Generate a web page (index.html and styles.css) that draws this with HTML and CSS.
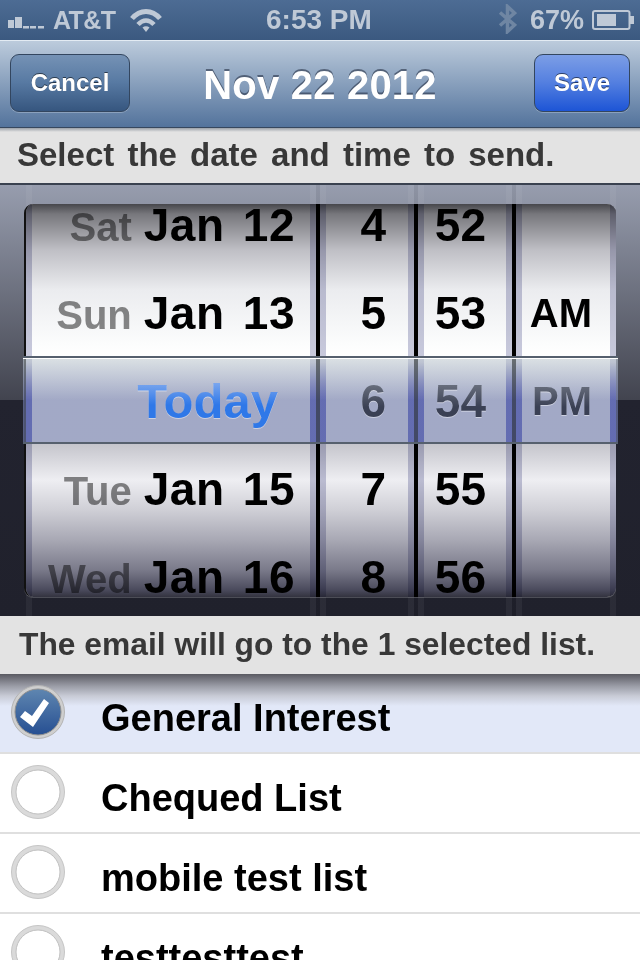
FILE: index.html
```html
<!DOCTYPE html>
<html lang="en">
<head>
<meta charset="utf-8">
<title>Send date</title>
<link rel="stylesheet" href="styles.css">
</head>
<body>
<div class="screen">
  <div class="status">
    <div class="status-left">
      <svg class="signal" width="38" height="12" viewBox="0 0 38 12"><rect x="0" y="3" width="6" height="8"/><rect x="7" y="0" width="7" height="11"/><rect x="15" y="9" width="6" height="2.500"/><rect x="22" y="9" width="6" height="2.500"/><rect x="30" y="9" width="6" height="2.500"/></svg>
      <span class="carrier">AT&amp;T</span>
      <svg class="wifi" width="32" height="24" viewBox="0 0 32 24"><path d="M2 10.500C10 1 22 1 30 10.500" fill="none" stroke="currentColor" stroke-width="5"/><path d="M8 16.500c5-5.500 11-5.500 16 0" fill="none" stroke="currentColor" stroke-width="4.500"/><path d="M12.500 19.500c2-1.800 5-1.800 7 0L16 24z" fill="currentColor"/></svg>
    </div>
    <span class="clock">6:53 PM</span>
    <div class="status-right">
      <svg class="bt" width="19" height="30" viewBox="0 0 19 30"><path d="M2 8.500L16.500 21L9.500 27.500V2.500L16.500 9L2 21.500" fill="none" stroke="currentColor" stroke-width="3.500"/></svg>
      <span class="pct">67%</span>
      <svg class="battery" width="42" height="20" viewBox="0 0 42 20"><rect x="1" y="1" width="36.500" height="18" rx="2" fill="none" stroke="currentColor" stroke-width="2"/><rect x="5" y="4" width="19" height="12" fill="currentColor"/><rect x="38" y="6" width="4" height="8" fill="currentColor"/></svg>
    </div>
  </div>
  <div class="nav">
    <button class="btn btn-cancel">Cancel</button>
    <h1 class="title">Nov 22 2012</h1>
    <button class="btn btn-save">Save</button>
  </div>
  <div class="bar bar-top">Select the date and time to send.</div>
  <div class="picker">
    <div class="wheels">
      <div class="wheel wheel-date">
        <div class="row"><span class="day">Sat</span>Jan 12</div>
        <div class="row"><span class="day">Sun</span>Jan 13</div>
        <div class="row row-today">Today</div>
        <div class="row"><span class="day">Tue</span>Jan 15</div>
        <div class="row"><span class="day">Wed</span>Jan 16</div>
      </div>
      <div class="wheel wheel-hour">
        <div class="row">4</div><div class="row">5</div><div class="row row-sel">6</div><div class="row">7</div><div class="row">8</div>
      </div>
      <div class="wheel wheel-min">
        <div class="row">52</div><div class="row">53</div><div class="row row-sel">54</div><div class="row">55</div><div class="row">56</div>
      </div>
      <div class="wheel wheel-ampm">
        <div class="row"></div><div class="row">AM</div><div class="row row-sel">PM</div><div class="row"></div><div class="row"></div>
      </div>
      <div class="shade"></div>
    </div>
    <div class="band"></div>
  </div>
  <div class="bar bar-info">The email will go to the 1 selected list.</div>
  <ul class="list">
    <li class="item item-on">
      <svg class="radio" width="56" height="56" viewBox="0 0 56 56"><defs><linearGradient id="blue" x1="0" y1="0" x2="0" y2="1"><stop offset="0" stop-color="#5f86b0"/><stop offset="1" stop-color="#264f92"/></linearGradient></defs><circle cx="28" cy="28" r="26.500" fill="#cfcfcf" stroke="#b4b4b4"/><circle cx="28" cy="28" r="23" fill="url(#blue)" stroke="#8f8f8f"/><path d="M10 33L15 27L22 32L34 15L39 19L23 43z" fill="#fff"/></svg>
      <span class="item-label">General Interest</span>
    </li>
    <li class="item">
      <svg class="radio" width="56" height="56" viewBox="0 0 56 56"><circle cx="28" cy="28" r="26.500" fill="#dadada" stroke="#c6c6c6"/><circle cx="28" cy="28" r="22" fill="#fff" stroke="#c0c0c0"/></svg>
      <span class="item-label">Chequed List</span>
    </li>
    <li class="item">
      <svg class="radio" width="56" height="56" viewBox="0 0 56 56"><circle cx="28" cy="28" r="26.500" fill="#dadada" stroke="#c6c6c6"/><circle cx="28" cy="28" r="22" fill="#fff" stroke="#c0c0c0"/></svg>
      <span class="item-label">mobile test list</span>
    </li>
    <li class="item">
      <svg class="radio" width="56" height="56" viewBox="0 0 56 56"><circle cx="28" cy="28" r="26.500" fill="#dadada" stroke="#c6c6c6"/><circle cx="28" cy="28" r="22" fill="#fff" stroke="#c0c0c0"/></svg>
      <span class="item-label">testtesttest</span>
    </li>
  </ul>
</div>
</body>
</html>
```

FILE: styles.css
```css
* { box-sizing: border-box; }
html, body { margin: 0; padding: 0; }
body { font-family: "Liberation Sans", Arial, sans-serif; font-weight: 700; background: #fff; }
.screen { width: 640px; height: 960px; overflow: hidden; display: flex; flex-direction: column; }

.status { height: 40px; flex: none; display: flex; align-items: center; justify-content: space-between; padding: 0 6px 0 8px; background: linear-gradient(#4d6c94, #3b5980); color: #bfc9d6; position: relative; }
.status-left, .status-right { display: flex; align-items: center; }
.signal { fill: currentColor; margin-right: 7px; margin-top: 6px; }
.carrier { font-size: 25px; letter-spacing: -.6px; }
.wifi { margin-left: 15px; margin-top: -1px; }
.clock { font-size: 28px; position: absolute; left: 266px; top: 4px; line-height: 32px; }
.bt { color: #6f86a3; margin-right: 13px; margin-top: -2px; }
.pct { font-size: 27px; margin-right: 8px; }
.battery { color: #bfc9d6; }

.nav { height: 88px; flex: none; display: flex; align-items: center; justify-content: space-between; padding: 0 10px; background: linear-gradient(#bccbdc, #53739c); border-top: 1px solid #e3ebf3; border-bottom: 1px solid #36475e; }
.btn { height: 58px; border-radius: 9px; font: 700 24px "Liberation Sans", Arial, sans-serif; color: #fff; text-shadow: 0 -1px 0 rgba(0,0,0,.55); border: 1px solid #33465f; box-shadow: 0 1px 0 rgba(255,255,255,.25); padding: 0; margin-top: -2px; }
.btn-cancel { width: 120px; background: linear-gradient(#7592b5, #587aa3 48%, #36567f); }
.btn-save { width: 96px; background: linear-gradient(#7c9ee6, #5580e0 48%, #1d55d6); }
.title { margin: 3px 24px 0 0; font-size: 40px; letter-spacing: .2px; color: #fff; text-shadow: 0 -2px 0 rgba(40,50,70,.6); }

.bar { flex: none; background: #e3e3e3; color: #383838; }
.bar-top { height: 57px; padding-left: 17px; font-size: 33px; line-height: 54px; border-bottom: 2px solid #3a4250; background: linear-gradient(#9aa0a8, #e3e3e3 4px); word-spacing: 4px; }
.bar-info { height: 58px; padding-left: 19px; font-size: 31.800px; line-height: 56px; }

.picker { height: 431px; flex: none; position: relative; padding: 19px 24px 18px; background:
  linear-gradient(90deg, transparent 26px, rgba(255,255,255,.05) 26px 32px, transparent 32px 310px, rgba(255,255,255,.05) 310px 316px, rgba(0,0,0,.06) 316px 320px, rgba(255,255,255,.05) 320px 326px, transparent 326px 408px, rgba(255,255,255,.05) 408px 414px, rgba(0,0,0,.06) 414px 418px, rgba(255,255,255,.05) 418px 424px, transparent 424px 506px, rgba(255,255,255,.05) 506px 512px, rgba(0,0,0,.06) 512px 516px, rgba(255,255,255,.05) 516px 522px, transparent 522px 610px, rgba(255,255,255,.05) 610px 616px, transparent 616px),
  linear-gradient(#979dae 0, #42444f 215px, #22232f 215px, #20212c 100%); }
.wheels { height: 393px; display: flex; gap: 4px; position: relative; overflow: hidden; border-radius: 9px; background: #000; border-left: 2px solid #111; box-shadow: 0 1px 0 rgba(255,255,255,.2); }
.wheel { flex: none; display: flex; flex-direction: column; justify-content: center; overflow: hidden; color: #000; background: linear-gradient(90deg, #c8c9dc 6px, #fff 6px, #fff calc(100% - 6px), #c8c9dc calc(100% - 6px)); }
.wheel-date { width: 290px; padding-right: 21px; letter-spacing: .5px; }
.wheel-hour { width: 94px; padding-right: 28px; }
.wheel-min { width: 94px; padding-right: 26px; }
.wheel-ampm { width: 100px; padding-right: 24px; }
.row { flex: none; height: 88px; line-height: 88px; font-size: 46px; text-align: right; white-space: nowrap; word-spacing: 5px; }
.wheel-ampm .row { font-size: 40px; }
.day { font-size: 40px; color: #888; margin-right: 12px; letter-spacing: 0; word-spacing: 0; }
.row-today, .row-sel { position: relative; z-index: 2; color: transparent; -webkit-background-clip: text; background-clip: text; filter: drop-shadow(0 1px 0 rgba(255,255,255,.45)); }
.row-today { font-size: 49px; letter-spacing: 0; padding-right: 17px; background-image: linear-gradient(#7aa6ee 26px, #2f78e8 48px); }
.row-sel { background-image: linear-gradient(#6c7280 26px, #3a4054 50px); }

.shade { position: absolute; inset: 0; pointer-events: none; mix-blend-mode: multiply; background: linear-gradient(#47474c 0, #77777c 10px, #bfbfc5 46px, #ebecef 86px, #fcfdfd 141px, #fff 152px, #cfcfcf 153px, #a0a0a0 196px, #a0a0a0 239px, #c5c5cc 240px, #eeeef2 276px, #cfcfd6 306px, #a8a8b4 336px, #7a7a8a 366px, #4a4a5c 386px, #33333f 393px); }
.band { position: absolute; left: 23px; right: 22px; top: 171px; height: 88px; border-top: 2px solid #56606e; border-bottom: 2px solid #56606e; background: linear-gradient(rgba(235,248,255,.45), rgba(165,182,255,.4) 50%, rgba(165,182,255,.4)); box-shadow: inset 0 1px 0 #fff; }
.band::before { content: ""; position: absolute; inset: 0; background: linear-gradient(90deg, transparent 3px, rgba(50,60,170,.45) 3px 9px, transparent 9px 287px, rgba(50,60,170,.45) 287px 293px, transparent 293px 297px, rgba(50,60,170,.45) 297px 303px, transparent 303px 385px, rgba(50,60,170,.45) 385px 391px, transparent 391px 395px, rgba(50,60,170,.45) 395px 401px, transparent 401px 483px, rgba(50,60,170,.45) 483px 489px, transparent 489px 493px, rgba(50,60,170,.45) 493px 499px, transparent 499px 587px, rgba(50,60,170,.45) 587px 593px, transparent 593px); -webkit-mask-image: linear-gradient(transparent 4px, #000 42px); mask-image: linear-gradient(transparent 4px, #000 42px); }

.list { list-style: none; margin: 0; padding: 0; flex: 1; }
.item { height: 80px; display: flex; align-items: center; gap: 35px; padding-left: 10px; font-size: 38px; color: #000; border-bottom: 2px solid #dfdfdf; }
.item-label { padding-top: 10px; }
.item-on { background: linear-gradient(#5a5a62, #9a9ca6 12px, #c8cbd6 22px, #e2e8f8 32px); }
.radio { flex: none; margin-top: -2px; }
```
